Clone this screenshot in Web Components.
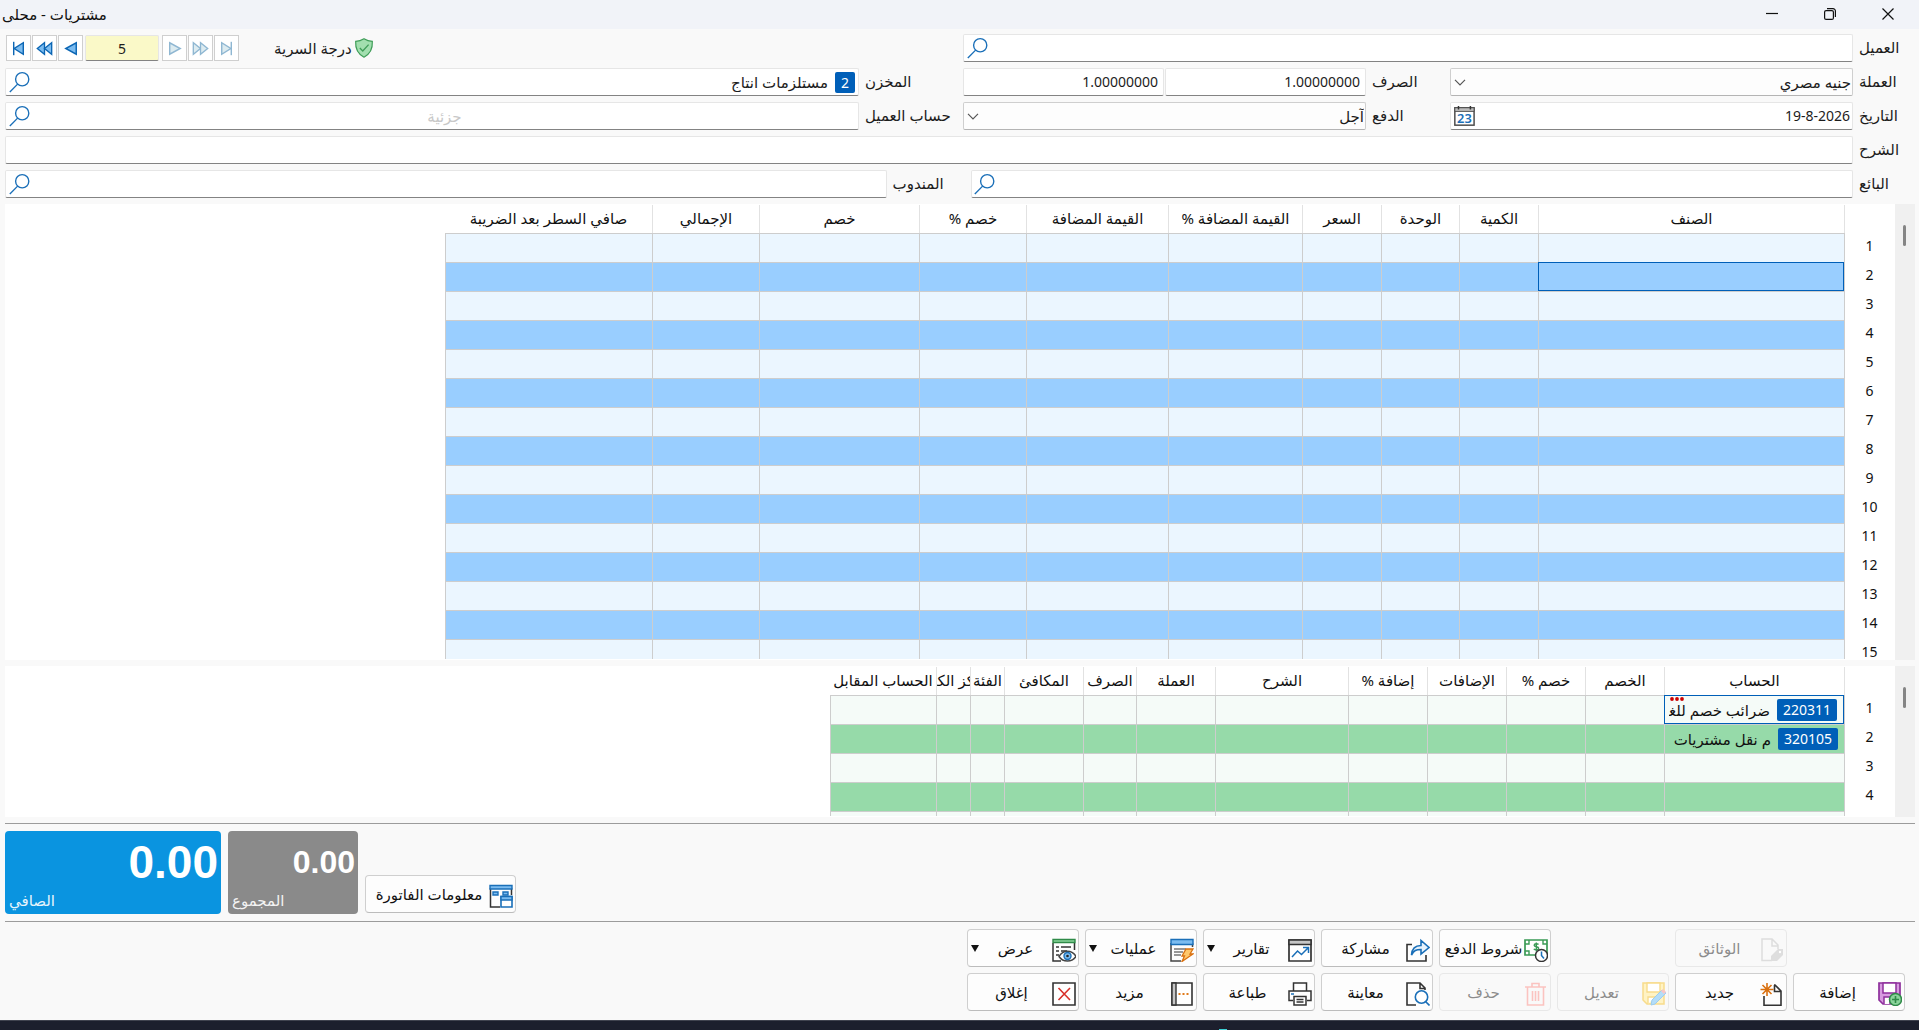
<!DOCTYPE html>
<html lang="ar" dir="rtl">
<head>
<meta charset="utf-8">
<title>مشتريات - محلى</title>
<style>
  body {
    margin: 0;
    background: #f9f9f9;
    color: #1c1c1c;
    font-family: "Noto Sans", "DejaVu Sans", sans-serif;
    font-size: 15px;
    line-height: 20px;
  }
</style>
</head>
<body>
<factura-app></factura-app>

<script>
// Iconos de la aplicación, todos en una caja de 24x24
const ICONOS = {
  lupa: '<g fill="none" stroke="#1a6fb8" stroke-width="1.5"><circle cx="15.500" cy="9" r="7.2"/><path d="M10.500 14.300 2 23"/></g>',
  flecha: '<path d="M6 9.5l6 6 6-6" fill="none" stroke="#555" stroke-width="1.4"/>',
  calendario: '<rect x="2" y="3" width="21" height="19" fill="#fff" stroke="#4a4a4a" stroke-width="1.6"/><path d="M2 3h21v4H2z" fill="#bdbdbd" stroke="#4a4a4a"/><path d="M6 1v4M19 1v4" stroke="#333" stroke-width="1.6"/><text x="12.5" y="20" text-anchor="middle" direction="ltr" font-size="14" font-weight="600" font-family="Noto Sans" fill="#1a6fb8">23</text>',
  escudo: '<path d="M12 1c3 2 6 3 10 3 .5 9-2 15-10 19C4 19 1.500 13 2 4c4 0 7-1 10-3z" fill="#a2dfaf" stroke="#3f9d58" stroke-width="1.4"/><path d="M7 12l3.500 3.500L17.500 8" fill="none" stroke="#3f9d58" stroke-width="1.6"/>',
  primero: '<g stroke="#0c66b4" stroke-width="1.5"><path d="M7 5v14" fill="none"/><path d="M17 6v12L7.500 12z" fill="#7cbcf0"/></g>',
  atras: '<g stroke="#0c66b4" stroke-width="1.4" fill="#7cbcf0"><path d="M12 6v12L4.500 12z"/><path d="M19.500 6v12L12 12z"/></g>',
  previo: '<path d="M18 6v12L7 12z" fill="#7cbcf0" stroke="#0c66b4" stroke-width="1.5"/>',
  siguiente: '<path d="M7 6v12l11-6z" fill="#dcebf0" stroke="#8fb7d2" stroke-width="1.5"/>',
  adelante: '<g stroke="#8fb7d2" stroke-width="1.4" fill="#dcebf0"><path d="M4.500 6v12l7.500-6z"/><path d="M12 6v12l7.500-6z"/></g>',
  ultimo: '<g stroke="#8fb7d2" stroke-width="1.5"><path d="M7 6v12l9.500-6z" fill="#dcebf0"/><path d="M17 5v14" fill="none"/></g>',
  factura: '<path d="M1.500 4v19H11M22.500 4v7" fill="none" stroke="#333" stroke-width="1.5"/><path d="M1 1.500h22V5H1z" fill="#7cbcf0" stroke="#1a6fb8" stroke-width="1.4"/><path d="M4 8h5v3H4zM14 8h5v3h-5z" fill="#7cbcf0" stroke="#1a6fb8" stroke-width="1.4"/><path d="M12 12.500h11V23H12z" fill="#fff" stroke="#1a6fb8" stroke-width="1.6"/><path d="M12 12.500h11V16H12z" fill="#7cbcf0" stroke="#1a6fb8" stroke-width="1.4"/>',
  anadir: '<path d="M1 1h21v14l-7 7H5l-4-4z" fill="#d79be0" stroke="#8e2f9c" stroke-width="1.7"/><path d="M5 1h13v10H5z" fill="#fff" stroke="#8e2f9c" stroke-width="1.5"/><path d="M6 22v-7h6v7" fill="#fff" stroke="#8e2f9c" stroke-width="1.5"/><circle cx="17.500" cy="17.500" r="6" fill="#8bd49b" stroke="#2f8a48" stroke-width="1.5"/><path d="M17.500 14v7M14 17.500h7" stroke="#2f8a48" stroke-width="1.6"/>',
  nuevo: '<path d="M4 14v9.300h17V9l-6-6h-1M14.500 3v6.500H21" fill="none" stroke="#333" stroke-width="1.6"/><path d="M7 1v13M.5 7.500h13M2.500 3l9 9M11.500 3l-9 9" stroke="#d9700f" stroke-width="1.6"/>',
  editar: '<path d="M1 1h21v21H5l-4-4z" fill="#fff3c4" stroke="#f8dc8c" stroke-width="1.5"/><path d="M5 1h13v9H5zM6 22v-7h7" fill="#fff" stroke="#f8dc8c" stroke-width="1.4"/><path d="M9 23l1-5L20 8l4 3L13 22z" fill="#b4ddf8" stroke="#9bcdf0"/><path d="M19 9l2-2 3 3-2 2z" fill="#fac4c4"/>',
  borrar: '<g fill="none" stroke="#fbc3c0" stroke-width="1.6"><path d="M1 5h21M8 5V1.500h7V5M3.500 5v18h16V5M8.500 9v10M11.500 9v10M14.500 9v10"/></g>',
  documentos: '<path d="M12 22.500H2V1h10l6 6v4M12 1v7h6" fill="none" stroke="#ddd" stroke-width="1.5"/><path d="M11 23v-5l7-7h5v6l-6 6z" fill="#dedede"/><circle cx="20" cy="14" r="1.200" fill="#fff"/>',
  pago: '<path d="M1 2h22v15H1z" fill="#fff" stroke="#3a9a55" stroke-width="1.7"/><path d="M1 6h4V2M19 2v4h4M1 13h4v4" fill="none" stroke="#3a9a55" stroke-width="1.400"/><path d="M14.500 6.500c-1-1.200-4.500-1-4.300.8.3 2 4.300 1 4.500 3 0 2-3.700 2-4.900.6M12.300 4.500v9" fill="none" stroke="#3a9a55" stroke-width="1.400"/><circle cx="17.500" cy="17.500" r="6" fill="#fff" stroke="#333" stroke-width="1.500"/><path d="M17.500 13.500v4l2.500 3" fill="none" stroke="#1a6fb8" stroke-width="1.500"/>',
  compartir: '<path d="M6 6.500H1V23h19v-6" fill="none" stroke="#333" stroke-width="1.600"/><path d="M5.500 17C6 9.500 9.500 7.500 15 7.500v-5L23 9.500l-8 6.500v-4.500c-5 0-7 1-9.500 5.500z" fill="#e6f2fc" stroke="#1a6fb8" stroke-width="1.600"/>',
  informes: '<path d="M1 2h22v21H1z" fill="#fff" stroke="#333" stroke-width="1.700"/><path d="M1 2h22v4.500H1z" fill="#c6c6c6" stroke="#333" stroke-width="1.500"/><path d="M4 19l5.500-6 4 3.500L20 10M15 9.500h5.500V15" fill="none" stroke="#1a6fb8" stroke-width="1.500"/>',
  operaciones: '<path d="M1 5v18h10M22.500 5v4" fill="none" stroke="#444" stroke-width="1.500"/><path d="M1 1.500h22v5H1z" fill="#7cbcf0" stroke="#1a6fb8" stroke-width="1.400"/><path d="M4 11h12M4 14h9M4 17h7" stroke="#777" stroke-width="1.300"/><path d="M16 11h7l-3 5h3L12 23.500l2.500-5.500H12z" fill="#ffc76b" stroke="#d9700f" stroke-width="1.300"/>',
  vista: '<path d="M1 5v18h8M22.500 5v7" fill="none" stroke="#333" stroke-width="1.500"/><path d="M1 1.500h22v3H1z" fill="#8bd49b" stroke="#2f8a48" stroke-width="1.400"/><path d="M4 9h3M9 9h10M4 13h3M9 13h6M4 17h3" stroke="#333" stroke-width="1.500"/><path d="M7 18.500c4-7 13-7 17 0-4 6-13 6-17 0z" fill="#fff" stroke="#444" stroke-width="1.500"/><circle cx="15.500" cy="18" r="3.500" fill="#7cbcf0" stroke="#1a6fb8" stroke-width="1.400"/><circle cx="15.500" cy="18" r="1.300" fill="#222"/>',
  previa: '<path d="M10 23H1V1h13l5 5v2M14 1v5.500h5" fill="none" stroke="#333" stroke-width="1.600"/><circle cx="15.500" cy="15" r="6.200" fill="#fff" stroke="#1a6fb8" stroke-width="1.600"/><path d="M19.500 19.500l4 4" stroke="#1a6fb8" stroke-width="1.600"/>',
  imprimir: '<g fill="#fff" stroke="#333" stroke-width="1.500"><path d="M5.500 9V1h13v8"/><path d="M5 18.500H1V9h22v9.500h-4"/><path d="M6 14.500h12V23H6z"/><path d="M8.500 17.500h7M8.500 20h7" /></g><path d="M3 12h3" stroke="#1a6fb8" stroke-width="1.500"/>',
  mas: '<path d="M2 1h20v22H2z" fill="#fff" stroke="#333" stroke-width="1.600"/><path d="M2 1h4v22H2z" fill="#c6c6c6" stroke="#333" stroke-width="1.400"/><path d="M8.500 12h2M12.500 12h2M16.500 12h2" stroke="#e07a1a" stroke-width="2"/>',
  cerrar: '<path d="M1 1h22v22H1z" fill="#fff" stroke="#333" stroke-width="1.600"/><path d="M6.500 6l11.500 12M18 6L6.500 18" stroke="#d8302a" stroke-width="1.600"/>'
};

const icono = (nombre, lado = 24) =>
  `<svg viewBox="0 0 24 24" width="${lado}" height="${lado}" aria-hidden="true">${ICONOS[nombre]}</svg>`;

// Columnas y filas de las dos tablas de la factura
const TABLAS = {
  lineas: {
    filas: 16,
    activa: 2,
    columnas: [
      ['الصنف', 306], ['الكمية', 79], ['الوحدة', 78], ['السعر', 79],
      ['القيمة المضافة %', 134], ['القيمة المضافة', 142], ['خصم %', 107],
      ['خصم', 160], ['الإجمالي', 107], ['صافي السطر بعد الضريبة', 207]
    ],
    datos: []
  },
  cuentas: {
    filas: 5,
    activa: 1,
    columnas: [
      ['الحساب', 180], ['الخصم', 79], ['خصم %', 79], ['الإضافات', 79],
      ['إضافة %', 79], ['الشرح', 133], ['العملة', 79], ['الصرف', 53],
      ['المكافئ', 79], ['الفئة', 34], ['مركز الكلفة', 34], ['الحساب المقابل', 106]
    ],
    datos: [
      { codigo: '220311', nombre: 'ضرائب خصم للغير', cortado: true },
      { codigo: '320105', nombre: 'م نقل مشتريات' }
    ]
  }
};

// Barra de título de la ventana
class BarraTitulo extends HTMLElement {
  constructor() {
    super();
    this.attachShadow({ mode: 'open' });
    this.shadowRoot.innerHTML = `
      <style>
        :host { display: flex; height: 29px; padding-right: 2px; background: #f1f3f8; color: #111; }
        button { width: 58px; padding: 0 0 2px; border: 0; background: none; display: grid; place-items: center; }
        svg { fill: none; stroke: #111; stroke-width: 1.2; }
        h1 { margin: 0 auto 0 2px; margin-inline: auto 2px; font-size: 15px; font-weight: 400; line-height: 29px; }
      </style>
      <button aria-label="إغلاق"><svg width="12" height="12"><path d="M.5.5l11 11M11.500.5l-11 11"/></svg></button>
      <button aria-label="استعادة"><svg width="12" height="12"><rect x=".6" y="2.600" width="8.800" height="8.800" rx="1.500"/><path d="M3 .6h6a2.400 2.400 0 0 1 2.400 2.400v6"/></svg></button>
      <button aria-label="تصغير"><svg width="12" height="12"><path d="M0 5.500h12"/></svg></button>
      <h1><slot></slot></h1>
    `;
  }
}
customElements.define('barra-titulo', BarraTitulo);

// Campo con etiqueta: texto, búsqueda, fecha, lista o un par de valores
class CampoFactura extends HTMLElement {
  constructor() {
    super();
    this.attachShadow({ mode: 'open' });
  }

  connectedCallback() {
    this.render();
  }

  render = () => {
    const etiqueta = this.getAttribute('etiqueta');
    const tipo = this.getAttribute('tipo') || 'texto';
    const valor = this.getAttribute('valor') || '';
    const codigo = this.getAttribute('codigo');
    const aviso = this.getAttribute('aviso') || '';
    let caja = '';

    if (tipo === 'lista') {
      caja = `<div class="lista"><select id="campo"><option>${valor}</option></select>${icono('flecha', 20)}</div>`;
    } else if (tipo === 'par') {
      caja = `
        <div class="caja numero"><input id="campo" value="${valor}" dir="ltr"></div>
        <div class="caja numero"><input aria-label="${etiqueta} 2" value="${valor}" dir="ltr"></div>`;
    } else {
      const boton = tipo === 'buscar' ? 'lupa' : tipo === 'fecha' ? 'calendario' : '';
      caja = `
        <div class="caja ${tipo}">
          ${codigo ? `<span class="codigo">${codigo}</span>` : ''}
          <input id="campo" value="${valor}" placeholder="${aviso}" ${tipo === 'fecha' ? 'dir="ltr"' : ''}>
          ${boton ? `<button type="button" aria-label="${etiqueta}">${icono(boton, 22)}</button>` : ''}
        </div>`;
    }

    this.shadowRoot.innerHTML = `
      <style>
        :host { display: flex; height: 28px; gap: 1px; min-width: 0; }
        label { flex: none; box-sizing: border-box; width: var(--etiqueta, 61px); padding-left: 5px; text-align: left; line-height: 27px; white-space: nowrap; }
        .caja, select { box-sizing: border-box; height: 28px; border: 1px solid #e6e6e6; border-bottom-color: #838383; border-radius: 2px; background: #fff; }
        .caja { flex: 1; display: flex; align-items: center; min-width: 0; }
        input { flex: 1; min-width: 0; width: 0; height: 24px; box-sizing: border-box; padding: 0 4px; border: 0; background: none; font: inherit; color: inherit; outline: 0; }
        input::placeholder { color: #c8c8c8; text-align: center; }
        .numero input, .fecha input { padding: 0 5px 2px; text-align: right; font-size: 14px; }
        .fecha input { padding: 0 2px 2px; }
        button { flex: none; width: 25px; padding: 0; border: 0; background: none; display: grid; place-items: center; }
        .codigo { margin: 0 3px; padding: 0 6px; background: #005fb8; color: #fff; border-radius: 2px; font-size: 14px; line-height: 21px; }
        .lista { flex: 1; display: grid; min-width: 0; }
        .lista > * { grid-area: 1 / 1; }
        .lista svg { justify-self: end; align-self: center; pointer-events: none; }
        select { appearance: none; width: 100%; padding: 0 1px; border-color: #cfcfcf; border-bottom-color: #b4b4b4; background: #fdfdfd; font: inherit; color: inherit; }
      </style>
      <label for="campo">${etiqueta}</label>
      ${caja}
    `;
  };
}
customElements.define('campo-factura', CampoFactura);

// Navegación entre facturas y grado de confidencialidad
class NavegadorFacturas extends HTMLElement {
  constructor() {
    super();
    this.attachShadow({ mode: 'open' });
    const boton = (nombre, texto, extra = '') =>
      `<button type="button" aria-label="${texto}" ${extra}>${icono(nombre, 23)}</button>`;
    this.shadowRoot.innerHTML = `
      <style>
        :host { display: flex; direction: ltr; align-items: center; gap: 1px; height: 28px; padding-left: 1px; }
        button { width: 25px; height: 26px; padding: 0; border: 1px solid #cfcfcf; background: #fff; display: grid; place-items: center; box-sizing: border-box; }
        input { width: 74px; height: 26px; box-sizing: border-box; margin: 0 2px 0 1px; border: 1px solid #e6e6e6; border-bottom-color: #838383; border-radius: 2px; background: #faf9c8; text-align: center; font: inherit; font-size: 14px; color: inherit; }
        .secreto { display: flex; align-items: center; gap: 2px; margin-left: 34px; direction: rtl; }
      </style>
      ${boton('primero', 'الأول')}${boton('atras', 'رجوع')}${boton('previo', 'السابق')}
      <input value="5" aria-label="رقم الفاتورة">
      ${boton('siguiente', 'التالي', 'disabled')}${boton('adelante', 'تقدم', 'disabled')}${boton('ultimo', 'الأخير', 'disabled')}
      <span class="secreto">${icono('escudo', 20)}<span>درجة السرية</span></span>
    `;
  }
}
customElements.define('navegador-facturas', NavegadorFacturas);

// Tabla con números de fila y barra de desplazamiento
class TablaFactura extends HTMLElement {
  constructor() {
    super();
    this.attachShadow({ mode: 'open' });
  }

  connectedCallback() {
    this.render();
  }

  // Contenido de la primera celda de cada fila
  celda = (dato) => {
    if (!dato) return '';
    return `
      <div class="cuenta">
        <span class="codigo">${dato.codigo}</span><span class="nombre">${dato.nombre}</span>
        ${dato.cortado ? '<svg class="puntos" width="14" height="4"><g fill="#c00"><circle cx="2" cy="2" r="1.900"/><circle cx="7" cy="2" r="1.900"/><circle cx="12" cy="2" r="1.900"/></g></svg>' : ''}
      </div>`;
  };

  render = () => {
    const tabla = TABLAS[this.getAttribute('tabla')];
    const ancho = tabla.columnas.reduce((total, c) => total + c[1], 51);
    const filas = Array.from({ length: tabla.filas }, (_, i) => `
      <tr>
        <th scope="row">${i + 1}</th>
        ${tabla.columnas.map((c, j) => `<td class="${j === 0 && i + 1 === tabla.activa ? 'activa' : ''}">${j === 0 ? this.celda(tabla.datos[i]) : ''}</td>`).join('')}
      </tr>`).join('');

    this.shadowRoot.innerHTML = `
      <style>
        :host { display: flex; align-items: flex-start; overflow: hidden; background: #fff; color: #111; }
        .barra { flex: none; align-self: stretch; width: 20px; background: #f0f0f0; }
        .barra i { display: block; width: 3px; height: 21px; margin: 21px 9px 0 0; border-radius: 2px; background: #858585; }
        .marco { flex: 1; align-self: stretch; min-width: 0; overflow: hidden; padding-top: 1px; margin-bottom: 1px; }
        table { width: ${ancho}px; table-layout: fixed; border-collapse: separate; border-spacing: 0; }
        th, td { box-sizing: border-box; padding: 0; font-weight: 400; overflow: hidden; }
        thead th { height: 28px; padding-bottom: 2px; border-left: 1px solid #e2e2e2; }
        thead th:last-child { border-left: 0; }
        thead div { display: flex; justify-content: center; white-space: nowrap; overflow: hidden; }
        tbody tr { height: 29px; background: var(--clara); }
        tbody tr:nth-child(even) { background: var(--oscura); }
        tbody th { padding: 0 1px 3px 0; background: #fff; border-left: 1px solid #cdcdcd; font-size: 14px; }
        td { height: 29px; border-top: 1px solid #cdcdcd; border-left: 1px solid #cdcdcd; }
        td.activa { border: 1px solid #005fb8; }
        .cuenta { display: flex; align-items: center; gap: 7px; position: relative; padding: 0 6px 0 4px; white-space: nowrap; overflow: hidden; }
        .codigo { padding: 0 6px; background: #005fb8; color: #fff; border-radius: 2px; font-size: 14px; line-height: 22px; }
        .nombre { flex: 1; min-width: 0; overflow: hidden; line-height: 26px; }
        .puntos { position: absolute; left: 5px; top: 0; }
      </style>
      <div class="barra"><i></i></div>
      <div class="marco">
        <table>
          <colgroup><col style="width:51px">${tabla.columnas.map(c => `<col style="width:${c[1]}px">`).join('')}</colgroup>
          <thead><tr><th></th>${tabla.columnas.map(c => `<th scope="col"><div>${c[0]}</div></th>`).join('')}</tr></thead>
          <tbody>${filas}</tbody>
        </table>
      </div>
    `;
  };
}
customElements.define('tabla-factura', TablaFactura);

// Tarjeta con un importe total
class TarjetaTotal extends HTMLElement {
  constructor() {
    super();
    this.attachShadow({ mode: 'open' });
    this.shadowRoot.innerHTML = `
      <style>
        :host { display: flex; flex-direction: column; box-sizing: border-box; height: 83px; padding: 3px 3px 3px 4px; border-radius: 4px; color: #fff; }
        .importe { direction: ltr; text-align: right; font-family: "Liberation Sans", Arial, sans-serif; font-size: var(--importe); font-weight: 700; line-height: 57px; }
        .nombre { text-align: left; font-size: 15px; line-height: 19px; opacity: .9; }
      </style>
      <div class="importe"><slot></slot></div>
      <div class="nombre"></div>
    `;
  }

  connectedCallback() {
    this.shadowRoot.querySelector('.nombre').textContent = this.getAttribute('nombre');
  }
}
customElements.define('tarjeta-total', TarjetaTotal);

// Botón de acción con icono y, si hace falta, flecha de menú
class BotonAccion extends HTMLElement {
  constructor() {
    super();
    this.attachShadow({ mode: 'open' });
  }

  connectedCallback() {
    const inactivo = this.hasAttribute('inactivo');
    this.shadowRoot.innerHTML = `
      <style>
        :host { display: block; min-width: 0; }
        button { display: flex; align-items: center; width: 100%; height: 38px; box-sizing: border-box; padding: 0 2px 0 3px; border: 1px solid #cfcfcf; border-bottom-color: #bcbcbc; border-radius: 4px; background: #fdfdfd; font: inherit; color: #111; white-space: nowrap; }
        button:disabled { border-color: #e8e8e8; background: #f9f9f9; color: #8c8c8c; }
        button > svg { flex: none; margin-top: 3px; }
        .texto { flex: 1; text-align: center; }
        .menu { width: 0; border: 4px solid transparent; border-top: 7px solid #111; border-bottom: 0; }
      </style>
      <button type="button" ${inactivo ? 'disabled' : ''}>
        ${icono(this.getAttribute('icono'))}
        <span class="texto"><slot></slot></span>
        ${this.hasAttribute('menu') ? '<span class="menu"></span>' : ''}
      </button>
    `;
  }
}
customElements.define('boton-accion', BotonAccion);

// Ventana completa de la factura de compra
class FacturaApp extends HTMLElement {
  constructor() {
    super();
    this.attachShadow({ mode: 'open' });
    this.shadowRoot.innerHTML = `
      <style>
        :host { display: flex; flex-direction: column; height: 100vh; overflow: hidden; }
        main { flex: 1; min-height: 0; display: flex; flex-direction: column; gap: 6px; padding: 5px 4px 0 5px; }
        form { display: flex; flex-direction: column; gap: 6px; }
        .datos { display: grid; grid-template-columns: 465fr 487fr 958fr; gap: 6px 0; }
        .datos > .doble { grid-column: span 2; }
        .datos > .todo { grid-column: 1 / -1; }
        .media { --etiqueta: 83px; }
        .larga { --etiqueta: 103px; }
        .personas { display: grid; grid-template-columns: 944fr 965fr; }
        .lineas { flex: 1; min-height: 0; --clara: #ebf6ff; --oscura: #99ceff; }
        .cuentas { flex: none; height: 151px; --clara: #f5fbf8; --oscura: #96daa9; }
        footer { border-top: 1px solid #9c9c9c; }
        .totales { display: flex; direction: ltr; align-items: flex-end; gap: 7px; padding: 7px 0; border-bottom: 1px solid #9c9c9c; }
        .totales > * { direction: rtl; }
        .neto { width: 216px; background: #0a94e0; --importe: 46px; }
        .suma { width: 130px; background: #8a8a8a; --importe: 32px; }
        .info { width: 151px; padding-bottom: 1px; }
        .acciones { display: grid; grid-template-columns: repeat(8, 112px); gap: 6px; padding: 7px 10px 9px 0; }
        .hueco { grid-column-start: 2; }
        .salto { grid-column-start: 4; }
        .tareas { flex: none; display: flex; direction: ltr; align-items: flex-end; height: 10px; box-sizing: border-box; border-top: 1px solid #40434f; background: #1c1f2d; }
        .tareas i { width: 8px; height: 1px; margin-left: 63.500%; background: #3fd0d4; }
      </style>
      <barra-titulo>مشتريات - محلى</barra-titulo>
      <main>
        <form>
          <div class="datos">
            <campo-factura class="doble" etiqueta="العميل" tipo="buscar"></campo-factura>
            <navegador-facturas></navegador-facturas>
            <campo-factura etiqueta="العملة" tipo="lista" valor="جنيه مصري"></campo-factura>
            <campo-factura class="media" etiqueta="الصرف" tipo="par" valor="1.00000000"></campo-factura>
            <campo-factura class="larga" etiqueta="المخزن" tipo="buscar" codigo="2" valor="مستلزمات انتاج"></campo-factura>
            <campo-factura etiqueta="التاريخ" tipo="fecha" valor="19-8-2026"></campo-factura>
            <campo-factura class="media" etiqueta="الدفع" tipo="lista" valor="آجل"></campo-factura>
            <campo-factura class="larga" etiqueta="حساب العميل" tipo="buscar" aviso="جزئية"></campo-factura>
            <campo-factura class="todo" etiqueta="الشرح"></campo-factura>
          </div>
          <div class="personas">
            <campo-factura etiqueta="البائع" tipo="buscar"></campo-factura>
            <campo-factura class="media" etiqueta="المندوب" tipo="buscar"></campo-factura>
          </div>
        </form>
        <tabla-factura class="lineas" tabla="lineas"></tabla-factura>
        <tabla-factura class="cuentas" tabla="cuentas"></tabla-factura>
        <footer>
          <div class="totales">
            <tarjeta-total class="neto" nombre="الصافي">0.00</tarjeta-total>
            <tarjeta-total class="suma" nombre="المجموع">0.00</tarjeta-total>
            <boton-accion class="info" icono="factura">معلومات الفاتورة</boton-accion>
          </div>
          <div class="acciones">
            <boton-accion class="hueco" icono="documentos" inactivo>الوثائق</boton-accion>
            <boton-accion class="salto" icono="pago">شروط الدفع</boton-accion>
            <boton-accion icono="compartir">مشاركة</boton-accion>
            <boton-accion icono="informes" menu>تقارير</boton-accion>
            <boton-accion icono="operaciones" menu>عمليات</boton-accion>
            <boton-accion icono="vista" menu>عرض</boton-accion>
            <boton-accion icono="anadir">إضافة</boton-accion>
            <boton-accion icono="nuevo">جديد</boton-accion>
            <boton-accion icono="editar" inactivo>تعديل</boton-accion>
            <boton-accion icono="borrar" inactivo>حذف</boton-accion>
            <boton-accion icono="previa">معاينة</boton-accion>
            <boton-accion icono="imprimir">طباعة</boton-accion>
            <boton-accion icono="mas">مزيد</boton-accion>
            <boton-accion icono="cerrar">إغلاق</boton-accion>
          </div>
        </footer>
      </main>
      <div class="tareas"><i></i></div>
    `;
  }
}
customElements.define('factura-app', FacturaApp);
</script>
</body>
</html>
